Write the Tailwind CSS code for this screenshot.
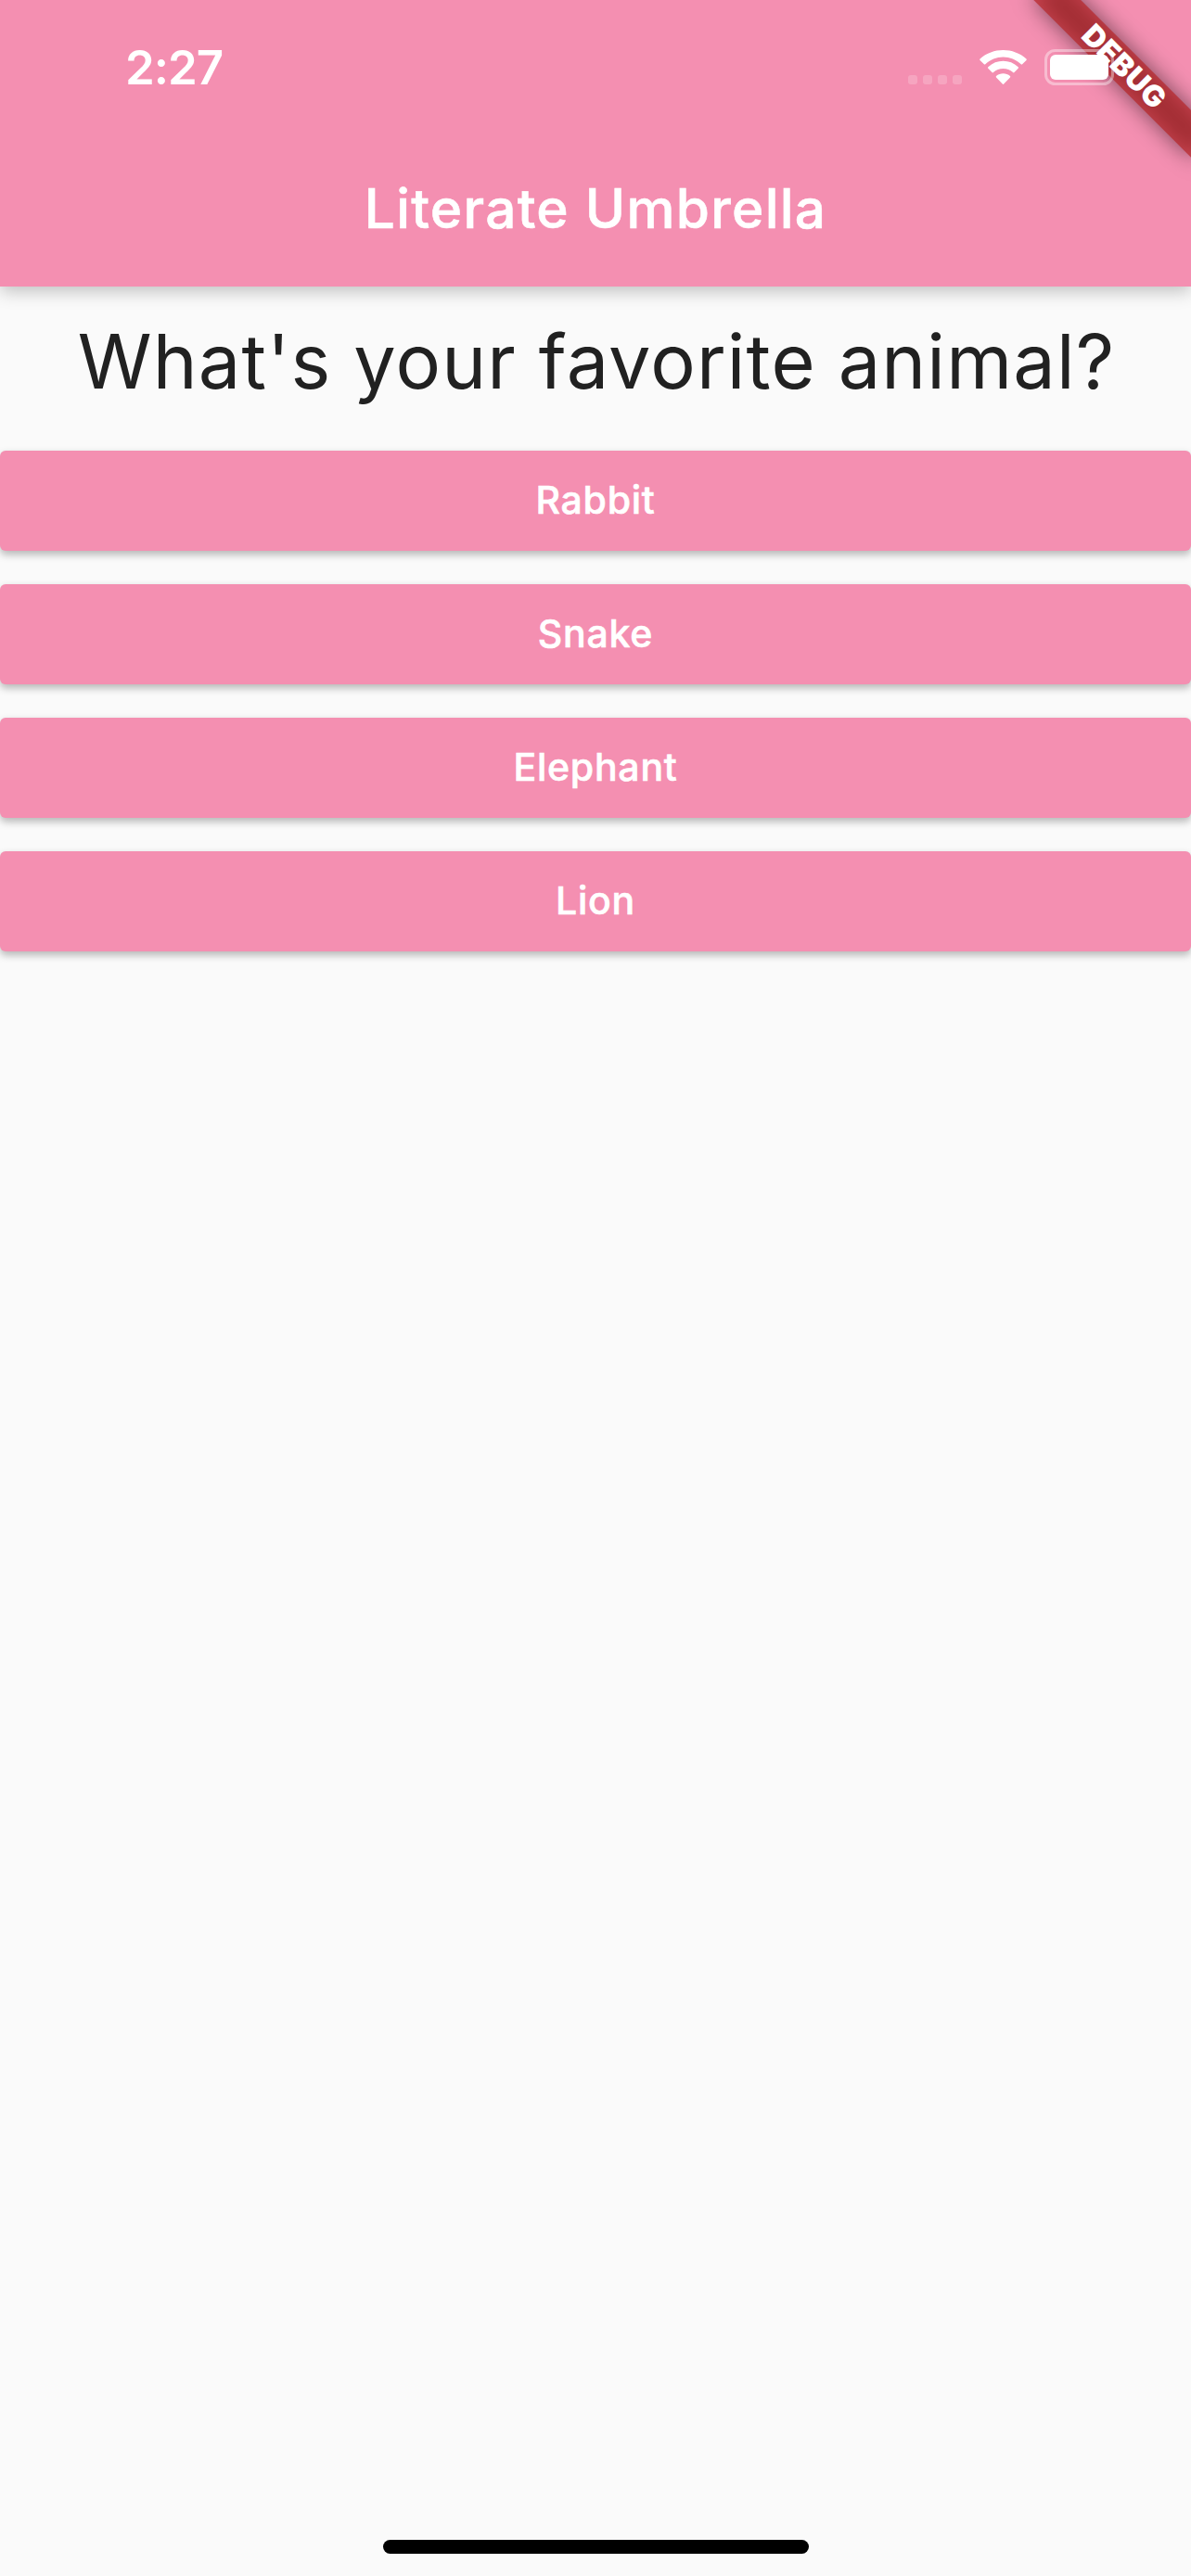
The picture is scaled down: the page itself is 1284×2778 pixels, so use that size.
<!DOCTYPE html>
<html lang="en">
<head>
<meta charset="utf-8">
<title>Literate Umbrella</title>
<script src="https://cdn.jsdelivr.net/npm/@tailwindcss/browser@4"></script>
</head>
<body class="relative flex h-[2778px] w-[1284px] flex-col overflow-hidden bg-[#fafafa] font-['Inter',sans-serif]">
  <header class="h-[309px] shrink-0 bg-[#f48fb1] shadow-[0_5px_18px_rgba(0,0,0,0.24)]">
    <div class="relative z-20 flex h-[141px] items-start justify-between pl-[135px] pr-[76px] pt-[42px] text-white">
      <span class="text-[51px] leading-[61px] font-semibold tracking-[-1px]">2:27</span>
      <svg class="mt-[8px] h-[46px] w-[236px]" viewBox="972 50 236 46" fill="#fff">
        <g fill-opacity=".2">
          <rect x="979" y="81" width="10" height="10" rx="3"/>
          <rect x="995" y="81" width="10" height="10" rx="3"/>
          <rect x="1011" y="81" width="10" height="10" rx="3"/>
          <rect x="1027" y="81" width="10" height="10" rx="3"/>
        </g>
        <path d="M1081.500 61.500c7.300 0 14.100 2.800 19.200 7.800.4.400 1 .4 1.400 0l4.400-4.400c.4-.4.4-1 0-1.400-13.900-12.700-36.100-12.700-50 0-.4.400-.4 1 0 1.400l4.400 4.400c.4.400 1 .4 1.400 0 5.100-5 11.900-7.800 19.200-7.800z"/>
        <path d="M1081.500 74c3.900 0 7.700 1.500 10.600 4.100.4.400 1 .4 1.400 0l4.200-4.300c.4-.4.4-1.100 0-1.500-9.100-8.600-23.300-8.600-32.400 0-.4.400-.4 1.100 0 1.500l4.200 4.300c.4.400 1 .4 1.400 0 2.900-2.600 6.700-4.100 10.600-4.100z"/>
        <path d="M1089 83.400c.4-.4.400-1 0-1.400-4.200-3.700-10.800-3.700-15 0-.4.400-.4 1 0 1.400l6.800 7.200c.4.400 1 .4 1.400 0z"/>
        <rect x="1127.500" y="54.500" width="72" height="36" rx="10" fill="none" stroke="#fff" stroke-width="3" stroke-opacity=".4"/>
        <rect x="1132" y="59" width="63" height="27" rx="6"/>
      </svg>
    </div>
    <h1 class="pt-[48px] text-center text-[58.500px] leading-[72px] font-medium tracking-[1.300px] text-white [-webkit-text-stroke:0.600px_white]">Literate Umbrella</h1>
  </header>

  <main class="flex flex-col">
    <h2 class="mt-[30px] h-[147px] whitespace-nowrap pl-[2px] text-center text-[81px] leading-[103px] tracking-[1.150px] text-[#212121]">What's your favorite animal?</h2>
    <div class="flex flex-col gap-[36px] text-[41px] leading-[106px] font-medium tracking-[0.750px] text-white [-webkit-text-stroke:0.600px_white]">
      <button class="h-[108px] rounded-[6px] bg-[#f48fb1] pb-[2px] shadow-[0_4px_9px_rgba(0,0,0,0.28)]">Rabbit</button>
      <button class="h-[108px] rounded-[6px] bg-[#f48fb1] pb-[2px] shadow-[0_4px_9px_rgba(0,0,0,0.28)]">Snake</button>
      <button class="h-[108px] rounded-[6px] bg-[#f48fb1] pb-[2px] shadow-[0_4px_9px_rgba(0,0,0,0.28)]">Elephant</button>
      <button class="h-[108px] rounded-[6px] bg-[#f48fb1] pb-[2px] shadow-[0_4px_9px_rgba(0,0,0,0.28)]">Lion</button>
    </div>
  </main>

  <!-- corner ribbon -->
  <div class="absolute right-0 top-0 z-10 h-[220px] w-[220px] overflow-hidden">
    <div class="absolute left-full top-0 h-0 w-0 origin-top-left rotate-45">
      <div class="absolute left-[-120px] top-[84px] h-[36px] w-[240px] bg-black/50 blur-[12px]"></div>
      <div class="absolute left-[-120px] top-[84px] h-[36px] w-[240px] bg-[#b71c1c]/63 text-center text-[32px] leading-[36px] font-black tracking-[0.300px] text-white">DEBUG</div>
    </div>
  </div>

  <div class="mx-auto mt-auto mb-[24px] h-[15px] w-[459px] rounded-full bg-black"></div>
</body>
</html>
